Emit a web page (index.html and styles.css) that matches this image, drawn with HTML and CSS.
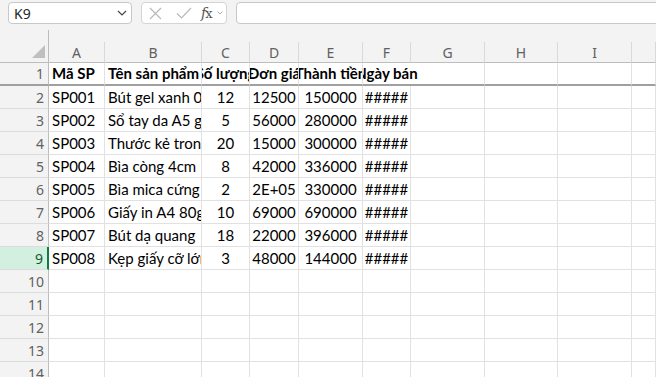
FILE: index.html
```html
<!DOCTYPE html>
<html>

<head>
    <meta charset="utf-8">
    <title>Bảng sản phẩm</title>
    <link rel="stylesheet" href="styles.css">
</head>

<body>
    <div class="toolbar">
        <div class="namebox">
            <span>K9</span>
            <svg width="10" height="6" viewBox="0 0 10 6"><path d="M1 1l4 4 4-4" fill="none" stroke="#444" stroke-width="1.2"/></svg>
        </div>
        <div class="fxbox">
            <svg class="ico-x" width="13" height="13" viewBox="0 0 13 13"><path d="M1 1l11 11M12 1L1 12" stroke="#b9b9b9" stroke-width="1.2"/></svg>
            <svg class="ico-ok" width="16" height="12" viewBox="0 0 16 12"><path d="M1 6.5l4.5 4.5L15 1" fill="none" stroke="#b9b9b9" stroke-width="1.2"/></svg>
            <span class="fx"><i>f</i>x</span>
            <svg width="6" height="4" viewBox="0 0 6 4"><path d="M0.5 0.5l2.5 2.5 2.5-2.5" fill="none" stroke="#aaa" stroke-width="1"/></svg>
        </div>
        <div class="formula"></div>
    </div>

    <div class="sheet">
        <!-- column headers -->
        <div class="corner"><div class="tri"></div></div>
        <div class="col">A</div><div class="col">B</div><div class="col">C</div><div class="col">D</div><div class="col">E</div>
        <div class="col">F</div><div class="col">G</div><div class="col">H</div><div class="col">I</div><div class="col"></div>

        <!-- row 1 -->
        <div class="rh first">1</div>
        <div class="cell first bold">Mã SP</div>
        <div class="cell first bold">Tên sản phẩm</div>
        <div class="cell first bold mid"><span>Số lượng</span></div>
        <div class="cell first bold mid"><span>Đơn giá</span></div>
        <div class="cell first bold mid"><span>Thành tiền</span></div>
        <div class="cell first bold span2"><div class="ctr"><span>Ngày bán</span></div></div>
        <div class="cell first"></div><div class="cell first"></div><div class="cell first"></div>

        <div class="rh">2</div>
        <div class="cell">SP001</div><div class="cell">Bút gel xanh 0.5mm</div>
        <div class="cell mid">12</div><div class="cell mid">12500</div><div class="cell mid">150000</div><div class="cell mid">#####</div>
        <div class="cell"></div><div class="cell"></div><div class="cell"></div><div class="cell"></div>

        <div class="rh">3</div>
        <div class="cell">SP002</div><div class="cell">Sổ tay da A5 gáy xoắn</div>
        <div class="cell mid">5</div><div class="cell mid">56000</div><div class="cell mid">280000</div><div class="cell mid">#####</div>
        <div class="cell"></div><div class="cell"></div><div class="cell"></div><div class="cell"></div>

        <div class="rh">4</div>
        <div class="cell">SP003</div><div class="cell">Thước kẻ trong 30cm</div>
        <div class="cell mid">20</div><div class="cell mid">15000</div><div class="cell mid">300000</div><div class="cell mid">#####</div>
        <div class="cell"></div><div class="cell"></div><div class="cell"></div><div class="cell"></div>

        <div class="rh">5</div>
        <div class="cell">SP004</div><div class="cell">Bìa còng 4cm</div>
        <div class="cell mid">8</div><div class="cell mid">42000</div><div class="cell mid">336000</div><div class="cell mid">#####</div>
        <div class="cell"></div><div class="cell"></div><div class="cell"></div><div class="cell"></div>

        <div class="rh">6</div>
        <div class="cell">SP005</div><div class="cell">Bìa mica cứng A4</div>
        <div class="cell mid">2</div><div class="cell mid">2E+05</div><div class="cell mid">330000</div><div class="cell mid">#####</div>
        <div class="cell"></div><div class="cell"></div><div class="cell"></div><div class="cell"></div>

        <div class="rh">7</div>
        <div class="cell">SP006</div><div class="cell">Giấy in A4 80gsm</div>
        <div class="cell mid">10</div><div class="cell mid">69000</div><div class="cell mid">690000</div><div class="cell mid">#####</div>
        <div class="cell"></div><div class="cell"></div><div class="cell"></div><div class="cell"></div>

        <div class="rh">8</div>
        <div class="cell">SP007</div><div class="cell">Bút dạ quang</div>
        <div class="cell mid">18</div><div class="cell mid">22000</div><div class="cell mid">396000</div><div class="cell mid">#####</div>
        <div class="cell"></div><div class="cell"></div><div class="cell"></div><div class="cell"></div>

        <div class="rh active">9</div>
        <div class="cell">SP008</div><div class="cell">Kẹp giấy cỡ lớn</div>
        <div class="cell mid">3</div><div class="cell mid">48000</div><div class="cell mid">144000</div><div class="cell mid">#####</div>
        <div class="cell"></div><div class="cell"></div><div class="cell"></div><div class="cell"></div>

        <div class="rh">10</div>
        <div class="cell"></div><div class="cell"></div><div class="cell"></div><div class="cell"></div><div class="cell"></div>
        <div class="cell"></div><div class="cell"></div><div class="cell"></div><div class="cell"></div><div class="cell"></div>

        <div class="rh">11</div>
        <div class="cell"></div><div class="cell"></div><div class="cell"></div><div class="cell"></div><div class="cell"></div>
        <div class="cell"></div><div class="cell"></div><div class="cell"></div><div class="cell"></div><div class="cell"></div>

        <div class="rh">12</div>
        <div class="cell"></div><div class="cell"></div><div class="cell"></div><div class="cell"></div><div class="cell"></div>
        <div class="cell"></div><div class="cell"></div><div class="cell"></div><div class="cell"></div><div class="cell"></div>

        <div class="rh">13</div>
        <div class="cell"></div><div class="cell"></div><div class="cell"></div><div class="cell"></div><div class="cell"></div>
        <div class="cell"></div><div class="cell"></div><div class="cell"></div><div class="cell"></div><div class="cell"></div>

        <div class="rh">14</div>
        <div class="cell"></div><div class="cell"></div><div class="cell"></div><div class="cell"></div><div class="cell"></div>
        <div class="cell"></div><div class="cell"></div><div class="cell"></div><div class="cell"></div><div class="cell"></div>
    </div>
</body>

</html>
```

FILE: styles.css
```css
* {
    box-sizing: border-box;
}

body {
    margin: 0;
    height: 377px;
    overflow: hidden;
    background-color: #f3f3f3;
    font-family: 'Noto Sans', sans-serif;
}

/* formula bar */
.toolbar {
    display: flex;
    height: 30px;
    padding: 2px 0 0 8px;
}

.namebox {
    width: 124px;
    height: 22px;
    background-color: #fff;
    border: 1px solid #c8c8c8;
    border-radius: 4px;
    display: flex;
    align-items: center;
    justify-content: space-between;
    padding: 0 4px 0 5px;
    font-size: 14px;
    color: #242424;
}

.fxbox {
    width: 86px;
    height: 22px;
    margin-left: 9px;
    background-color: #fff;
    border: 1px solid #d4d4d4;
    border-radius: 4px;
    display: flex;
    align-items: center;
    padding-left: 7px;
}

.ico-ok {
    margin-left: 14px;
}

.fx {
    margin-left: 9px;
    margin-right: 5px;
    font-family: 'DejaVu Serif', serif;
    font-size: 13px;
    color: #555;
    letter-spacing: -1px;
}

.fx i {
    font-size: 14px;
}

.formula {
    flex: 1;
    height: 22px;
    margin-left: 9px;
    margin-right: -20px;
    background-color: #fff;
    border: 1px solid #c8c8c8;
    border-radius: 4px;
}

/* grid */
.sheet {
    display: grid;
    grid-template-columns: 49px 56px 97px 48px 49px 64px 48px 74px 73px 74px 1fr;
    grid-template-rows: 33px 23px repeat(13, 23px);
}

.corner {
    background-color: #f3f3f3;
    border-right: 1px solid #bdbdbd;
    border-bottom: 1px solid #bdbdbd;
    display: flex;
    justify-content: flex-end;
    align-items: flex-end;
    padding: 0 3px 4px 0;
}

.tri {
    width: 0;
    height: 0;
    border-left: 13px solid transparent;
    border-bottom: 13px solid #bfbfbf;
}

.col {
    align-self: end;
    height: 21px;
    background-color: #f3f3f3;
    border-right: 1px solid #d9d9d9;
    border-bottom: 1px solid #bdbdbd;
    display: flex;
    align-items: center;
    justify-content: center;
    font-size: 14px;
    color: #616161;
}

.rh {
    background-color: #f3f3f3;
    border-right: 1px solid #bdbdbd;
    border-bottom: 1px solid #dcdcdc;
    display: flex;
    align-items: center;
    justify-content: flex-end;
    padding-right: 4px;
    font-size: 14px;
    color: #616161;
}

.rh.active {
    background-color: #d3efdf;
    border-right: 2px solid #107c41;
    color: #0e5c2f;
}

.cell {
    background-color: #fff;
    border-right: 1px solid #e1e1e1;
    border-bottom: 1px solid #e1e1e1;
    display: flex;
    align-items: flex-end;
    padding: 0 3px 2px;
    overflow: hidden;
    white-space: nowrap;
    font-family: Lato, 'Liberation Sans', sans-serif;
    font-size: 15px;
    color: #000;
}

.cell span {
    flex-shrink: 0;
}

.bold {
    font-weight: bold;
}

.mid {
    justify-content: center;
}

/* frozen first row */
.first {
    border-bottom: 2px solid #a0a0a0;
}

.rh.first {
    border-bottom: 2px solid #a0a0a0;
}

.span2 {
    grid-column: span 2;
    padding: 0 0 2px;
}

.ctr {
    width: 47px;
    flex-shrink: 0;
    display: flex;
    justify-content: center;
}
```
